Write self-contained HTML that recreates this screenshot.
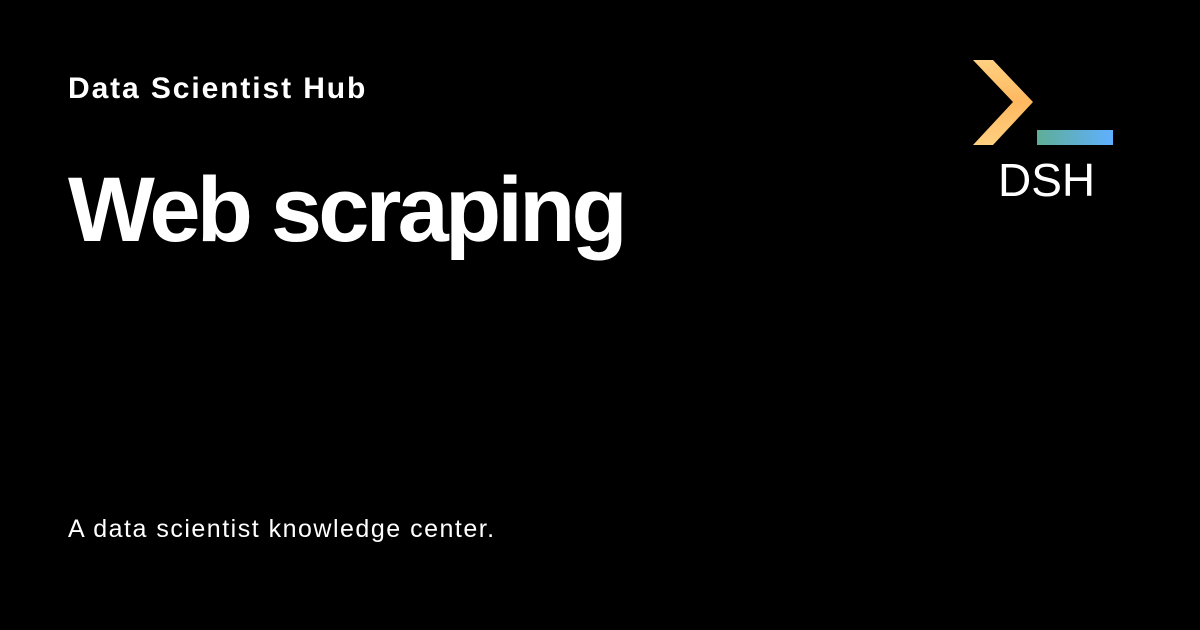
<!DOCTYPE html>
<html><head><style>
body{margin:0;width:1200px;height:630px;background:#000;overflow:hidden;position:relative;font-family:"Liberation Sans",sans-serif;color:#fff}
.a{position:absolute;left:68px;white-space:nowrap}
</style></head><body>
<div class="a" style="top:72px;font-size:30px;font-weight:bold;letter-spacing:1.9px">Data Scientist Hub</div>
<div class="a" style="top:158px;font-size:92px;font-weight:bold;letter-spacing:-3.8px">Web scraping</div>
<div class="a" style="top:515px;font-size:25px;letter-spacing:1.5px">A data scientist knowledge center.</div>
<svg style="position:absolute;left:0;top:0" width="1200" height="630">
<defs>
<linearGradient id="g" x1="0" y1="0" x2="1" y2="0"><stop offset="0" stop-color="#5fae97"/><stop offset="1" stop-color="#5fb0ff"/></linearGradient>
<linearGradient id="o" x1="0" y1="0" x2="0" y2="1"><stop offset="0" stop-color="#ffd080"/><stop offset="0.5" stop-color="#ffb860"/><stop offset="1" stop-color="#ffd080"/></linearGradient>
</defs>
<polygon points="973,60 993,60 1033,102 993,145 973,145 1013,102" fill="url(#o)"/>
<rect x="1037" y="130" width="76" height="15" fill="url(#g)"/>
<text x="998" y="196" font-family="Liberation Sans" font-size="46" fill="#fff">DSH</text>
</svg>
</body></html>
